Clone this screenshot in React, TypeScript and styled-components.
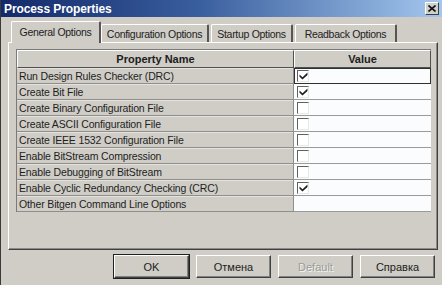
import React from "react";
import styled, { createGlobalStyle } from "styled-components";

const Global = createGlobalStyle`
  html, body { margin: 0; padding: 0; background: #cfcdc6; }
  * { box-sizing: border-box; }
`;

const FONT = `"Liberation Sans", Arial, sans-serif`;

const Window = styled.div`
  width: 442px;
  height: 285px;
  background: #cfcdc6;
  border-left: 1px solid #3a3a3a;
  display: flex;
  flex-direction: column;
  font-family: ${FONT};
  overflow: hidden;
`;

const TitleBar = styled.div`
  height: 17px;
  flex: none;
  display: flex;
  align-items: center;
  justify-content: space-between;
  padding: 0 3px 0 3px;
  background: linear-gradient(to right, #13296a 0%, #3a5f9e 45%, #a3c7ee 100%);
`;

const Title = styled.span`
  color: #ffffff;
  font-weight: bold;
  font-size: 12px;
  letter-spacing: -0.1px;
`;

const CloseBtn = styled.div`
  width: 14px;
  height: 13px;
  background: #d2d0ca;
  border-top: 1px solid #ffffff;
  border-left: 1px solid #ffffff;
  border-right: 1px solid #404040;
  border-bottom: 1px solid #404040;
  display: flex;
  align-items: center;
  justify-content: center;
`;

const Body = styled.div`
  flex: 1;
  display: flex;
  flex-direction: column;
  padding: 4px 4px 0 7px;
`;

const TabRow = styled.div`
  height: 21px;
  display: flex;
  align-items: flex-end;
  padding-left: 5px;
  gap: 2px;
  position: relative;
  z-index: 1;
`;

const Tab = styled.div<{ $w: number; $active?: boolean }>`
  width: ${(p) => p.$w + (p.$active ? 4 : 0)}px;
  height: ${(p) => (p.$active ? 22 : 18)}px;
  margin: ${(p) => (p.$active ? "0 -2px -1px -2px" : "0")};
  background: #cfcdc6;
  border-top: 1px solid #ffffff;
  border-left: 1px solid #ffffff;
  border-right: 2px solid #555;
  border-radius: 2px 2px 0 0;
  display: flex;
  align-items: center;
  justify-content: center;
  font-size: 10.5px;
  letter-spacing: -0.3px;
  color: #222;
  white-space: nowrap;
  padding-bottom: ${(p) => (p.$active ? 2 : 0)}px;
`;

const Panel = styled.div`
  height: 208px;
  width: 430px;
  border-top: 1px solid #ffffff;
  border-left: 1px solid #ffffff;
  border-right: 1px solid #404040;
  border-bottom: 1px solid #404040;
  box-shadow: inset -1px -1px 0 #8a8a8a;
  padding: 6px 0 0 7px;
`;

const Table = styled.div`
  width: 415px;
  display: grid;
  grid-template-columns: 277px 137px;
  border-left: 1px solid #7a7a7a;
  border-right: 1px solid #555;
  border-top: 1px solid #7a7a7a;
`;

const HeadCell = styled.div`
  height: 18px;
  background: #cfcdc6;
  border-top: 1px solid #ffffff;
  border-left: 1px solid #ffffff;
  border-right: 1px solid #505050;
  border-bottom: 1px solid #505050;
  font-weight: bold;
  font-size: 11px;
  color: #202020;
  display: flex;
  align-items: center;
  justify-content: center;
`;

const NameCell = styled.div`
  height: 16px;
  background: #cfcdc6;
  border-bottom: 1px solid #8e8e8e;
  border-right: 1px solid #8e8e8e;
  box-shadow: inset 0 1px 0 #e4e3de;
  font-size: 10.5px;
  letter-spacing: -0.15px;
  color: #1e1e1e;
  padding-left: 2px;
  display: flex;
  align-items: center;
  white-space: nowrap;
  overflow: hidden;
`;

const ValueCell = styled.div<{ $focus?: boolean }>`
  height: 16px;
  background: #fbfcfd;
  border-bottom: 1px solid #9a9a9a;
  outline: ${(p) => (p.$focus ? "1px solid #303030" : "none")};
  outline-offset: -1px;
  padding-left: 3px;
  display: flex;
  align-items: center;
`;

const Check = styled.div`
  width: 12px;
  height: 12px;
  background: #ffffff;
  border-top: 1px solid #606060;
  border-left: 1px solid #606060;
  border-right: 1px solid #e8e8e8;
  border-bottom: 1px solid #e8e8e8;
  display: flex;
  align-items: center;
  justify-content: center;
`;

const ButtonRow = styled.div`
  display: flex;
  justify-content: flex-end;
  gap: 7px;
  padding: 5px 3px 0 0;
`;

const Button = styled.div<{ $default?: boolean; $disabled?: boolean }>`
  width: 75px;
  height: 23px;
  background: #cfcdc6;
  border-top: 1px solid #ffffff;
  border-left: 1px solid #ffffff;
  border-right: 1px solid #404040;
  border-bottom: 1px solid #404040;
  box-shadow: ${(p) =>
    p.$default
      ? "0 0 0 1px #202020, inset -1px -1px 0 #808080"
      : "inset -1px -1px 0 #808080"};
  display: flex;
  align-items: center;
  justify-content: center;
  font-size: 11px;
  color: ${(p) => (p.$disabled ? "#9c9b97" : "#222")};
  text-shadow: ${(p) => (p.$disabled ? "1px 1px 0 #f4f4f4" : "none")};
`;

const rows: { name: string; check: boolean | null }[] = [
  { name: "Run Design Rules Checker (DRC)", check: true },
  { name: "Create Bit File", check: true },
  { name: "Create Binary Configuration File", check: false },
  { name: "Create ASCII Configuration File", check: false },
  { name: "Create IEEE 1532 Configuration File", check: false },
  { name: "Enable BitStream Compression", check: false },
  { name: "Enable Debugging of BitStream", check: false },
  { name: "Enable Cyclic Redundancy Checking (CRC)", check: true },
  { name: "Other Bitgen Command Line Options", check: null },
];

const CheckMark = () => (
  <svg width="9" height="9" viewBox="0 0 9 9">
    <path d="M0.5 3.5 L3.5 6.2 L8.5 1.5 L8.5 4 L3.5 8.5 L0.5 5.8 Z" fill="#202020" />
  </svg>
);

export default function App() {
  return (
    <Window>
      <Global />
      <TitleBar>
        <Title>Process Properties</Title>
        <CloseBtn>
          <svg width="8" height="7" viewBox="0 0 8 7">
            <path d="M0.5 0.5 L7.5 6.5 M7.5 0.5 L0.5 6.5" stroke="#111" strokeWidth="1.6" />
          </svg>
        </CloseBtn>
      </TitleBar>
      <Body>
        <TabRow>
          <Tab $w={86} $active>General Options</Tab>
          <Tab $w={108}>Configuration Options</Tab>
          <Tab $w={82}>Startup Options</Tab>
          <Tab $w={102}>Readback Options</Tab>
        </TabRow>
        <Panel>
          <Table>
            <HeadCell>Property Name</HeadCell>
            <HeadCell>Value</HeadCell>
            {rows.map((r, i) => (
              <React.Fragment key={r.name}>
                <NameCell>{r.name}</NameCell>
                <ValueCell $focus={i === 0}>
                  {r.check !== null && <Check>{r.check && <CheckMark />}</Check>}
                </ValueCell>
              </React.Fragment>
            ))}
          </Table>
        </Panel>
        <ButtonRow>
          <Button $default>OK</Button>
          <Button>Отмена</Button>
          <Button $disabled>Default</Button>
          <Button>Справка</Button>
        </ButtonRow>
      </Body>
    </Window>
  );
}
